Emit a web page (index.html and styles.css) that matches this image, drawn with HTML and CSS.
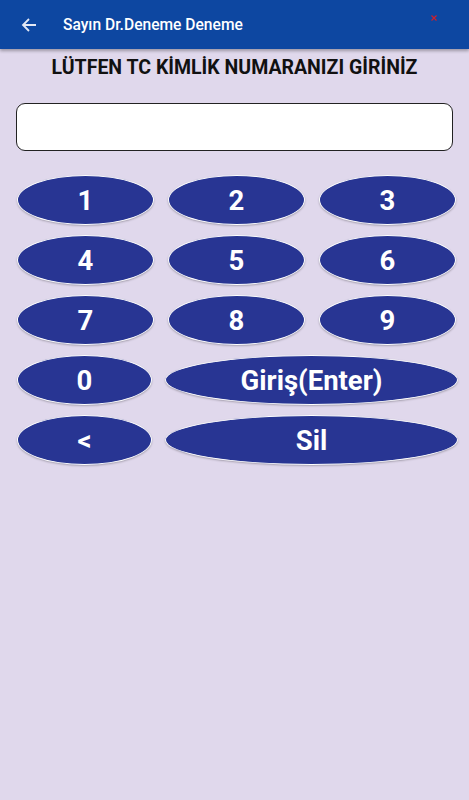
FILE: index.html
```html
<!DOCTYPE html>
<html lang="tr">
<head>
<meta charset="utf-8">
<title>Giriş</title>
<link rel="stylesheet" href="styles.css">
</head>
<body>
<header class="appbar">
  <svg class="back" width="16" height="16" viewBox="0 0 16 16" aria-hidden="true">
    <path d="M15 8H2M8 2L2 8l6 6" fill="none" stroke="#e3e8f4" stroke-width="1.8"/>
  </svg>
  <span class="appbar-title">Sayın Dr.Deneme Deneme</span>
  <svg class="close" width="6" height="6" viewBox="0 0 6 6" aria-hidden="true">
    <path d="M0.5 0.5l5 5M5.5 0.5l-5 5" stroke="#d0202a" stroke-width="1.2"/>
  </svg>
</header>
<main class="content">
  <h1 class="prompt">LÜTFEN TC KİMLİK NUMARANIZI GİRİNİZ</h1>
  <div class="field"></div>
  <div class="keypad">
    <button class="key">1</button>
    <button class="key">2</button>
    <button class="key">3</button>
    <button class="key">4</button>
    <button class="key">5</button>
    <button class="key">6</button>
    <button class="key">7</button>
    <button class="key">8</button>
    <button class="key">9</button>
  </div>
  <div class="keypad2">
    <button class="key">0</button>
    <button class="key">Giriş(Enter)</button>
    <button class="key">&lt;</button>
    <button class="key">Sil</button>
  </div>
</main>
</body>
</html>
```
FILE: styles.css
```css
* { box-sizing: border-box; }
html, body { margin: 0; padding: 0; }
body {
  background: #e0d8ec;
  font-family: Roboto, "Liberation Sans", sans-serif;
  width: 469px;
  height: 800px;
  overflow: hidden;
}
.appbar {
  height: 49px;
  background: #0d47a1;
  display: flex;
  align-items: center;
  padding-left: 21px;
  box-shadow: 0 2px 3px rgba(0,0,0,0.3);
  position: relative;
}
.back { display: block; }
.appbar-title {
  margin-left: 26px;
  color: #fff;
  font-size: 15.6px;
  font-weight: 500;
}
.close {
  position: absolute;
  left: 431px;
  top: 15px;
}
.content {
  padding: 0 16px 0 16px;
}
.prompt {
  margin: 0;
  padding-top: 6px;
  text-align: center;
  font-size: 19.5px;
  font-weight: 700;
  color: #111;
  line-height: 26px;
}
.field {
  margin-top: 22px;
  height: 48px;
  background: #fff;
  border: 1px solid #222;
  border-radius: 9px;
}
.key {
  height: 50px;
  border-radius: 50%;
  background: #283593;
  border: 1.5px solid #fff;
  box-shadow: 0 1px 2px rgba(0,0,0,0.25);
  color: #fff;
  font-family: Roboto, "Liberation Sans", sans-serif;
  font-weight: 700;
  font-size: 27.5px;
  padding: 0;
  display: flex;
  align-items: center;
  justify-content: center;
}
.keypad {
  margin-top: 24px;
  display: grid;
  grid-template-columns: repeat(3, 137px);
  column-gap: 14px;
  row-gap: 10px;
  padding-left: 1px;
}
.keypad2 {
  margin-top: 10px;
  display: grid;
  grid-template-columns: 135px 293px;
  column-gap: 13px;
  row-gap: 10px;
  padding-left: 1px;
}
```
